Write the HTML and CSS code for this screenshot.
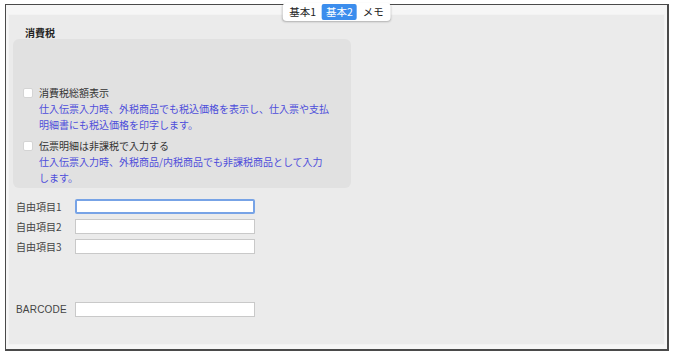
FILE: index.html
```html
<!DOCTYPE html>
<html lang="ja">
<head>
  <meta charset="UTF-8" />
  <title>仕入先設定</title>
  <link rel="stylesheet" href="styles.css">
</head>
<body>

  <div class="frame">
    <!-- タブ -->
    <div class="tabs">
      <span class="tab">基本1</span>
      <span class="tab active">基本2</span>
      <span class="tab">メモ</span>
    </div>

    <div class="panel">
      <div class="section-title">消費税</div>

      <!-- 消費税グループ -->
      <div class="group">
        <div class="option">
          <label class="check"><input type="checkbox" /><span>消費税総額表示</span></label>
          <div class="note">仕入伝票入力時、外税商品でも税込価格を表示し、仕入票や支払<br>明細書にも税込価格を印字します。</div>
        </div>
        <div class="option">
          <label class="check"><input type="checkbox" /><span>伝票明細は非課税で入力する</span></label>
          <div class="note">仕入伝票入力時、外税商品/内税商品でも非課税商品として入力<br>します。</div>
        </div>
      </div>

      <!-- 自由項目 -->
      <div class="fields">
        <div class="field">
          <label>自由項目1</label>
          <input type="text" class="focus" />
        </div>
        <div class="field">
          <label>自由項目2</label>
          <input type="text" />
        </div>
        <div class="field">
          <label>自由項目3</label>
          <input type="text" />
        </div>
      </div>

      <div class="fields barcode">
        <div class="field">
          <label>BARCODE</label>
          <input type="text" />
        </div>
      </div>
    </div>
  </div>

</body>
</html>
```

FILE: styles.css
```css
body {
  margin: 0;
  background-color: #fff;
  font-family: "Noto Sans CJK JP", "Noto Sans", sans-serif;
  font-size: 10px;
  color: #333;
}

/* 外枠 */
.frame {
  position: relative;
  margin: 4px 9px 0 5px;
  height: 347px;
  border: 1px solid #4a4a4a;
  border-width: 1px 2px 2px 1px;
  background-color: #f6f6f6;
  padding: 9px 2px 4px 2px;
  box-sizing: border-box;
}

/* タブ */
.tabs {
  position: absolute;
  top: -2px;
  left: 50%;
  transform: translateX(-50%);
  display: flex;
  gap: 2px;
  padding: 1px 3px;
  background-color: #fff;
  border-radius: 4px;
  box-shadow: 0 1px 2px rgba(0, 0, 0, 0.25);
}

.tab {
  padding: 0 4px;
  line-height: 16px;
  font-size: 10.5px;
  color: #222;
  border-radius: 2px;
}

.tab.active {
  background-color: #3b8ded;
  color: #fff;
}

.panel {
  height: 100%;
  box-sizing: border-box;
  background-color: #ebebeb;
  border: 1px solid #f3f3f3;
  padding: 12px 0 0 4px;
}

.section-title {
  font-weight: bold;
  font-size: 10px;
  line-height: 12px;
  padding-left: 12px;
  color: #222;
}

/* 消費税グループ */
.group {
  width: 338px;
  height: 149px;
  box-sizing: border-box;
  background-color: #e1e1e1;
  border-radius: 6px;
  padding: 46px 0 0 10px;
  display: flex;
  flex-direction: column;
  gap: 5px;
}

.check {
  display: flex;
  align-items: center;
  gap: 6px;
  line-height: 16px;
  color: #333;
}

.check input {
  margin: 0;
  width: 10px;
  height: 10px;
  appearance: none;
  background-color: #fff;
  border: 1px solid #d4d4d4;
  border-radius: 2px;
}

.note {
  padding-left: 16px;
  line-height: 16px;
  color: #4e4edb;
}

/* 自由項目 */
.fields {
  margin-top: 11px;
  padding-left: 3px;
  display: flex;
  flex-direction: column;
  gap: 5px;
}

.fields.barcode {
  margin-top: 48px;
}

.field {
  display: flex;
  align-items: center;
}

.field label {
  width: 59px;
  color: #444;
  line-height: 15px;
}

.barcode label {
  font-family: "Liberation Sans", Arial, sans-serif;
  letter-spacing: 0.2px;
}

.field input {
  width: 180px;
  height: 15px;
  box-sizing: border-box;
  margin: 0;
  border: 1px solid #c9c9c9;
  background-color: #fff;
  padding: 0 3px;
}

.field input.focus {
  border: 2px solid #77a3e6;
  border-radius: 2px;
}
```
